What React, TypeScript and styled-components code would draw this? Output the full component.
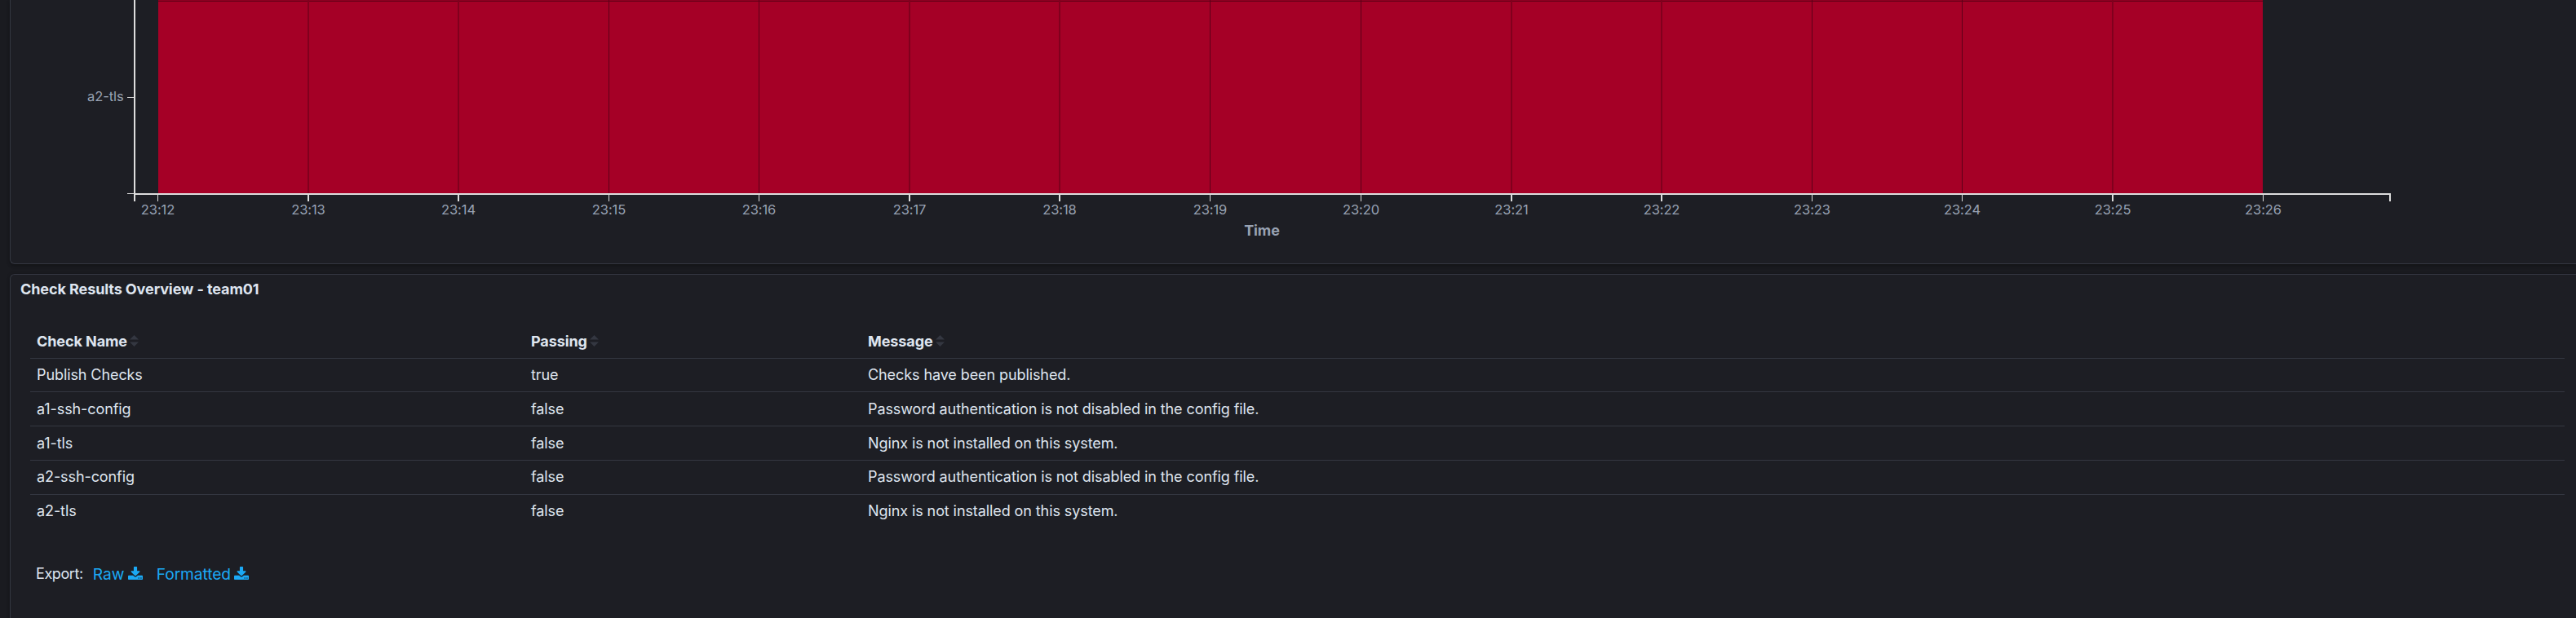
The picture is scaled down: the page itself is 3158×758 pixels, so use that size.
import React from "react";
import styled, { createGlobalStyle } from "styled-components";

const GlobalStyle = createGlobalStyle`
  * { box-sizing: border-box; }
  body {
    margin: 0;
    background: #1a1b20;
    color: #dfe5ef;
    font-family: Inter, "Liberation Sans", sans-serif;
    font-size: 18px;
    letter-spacing: -0.005em;
    overflow: hidden;
  }
`;

const Dashboard = styled.main`
  display: flex;
  flex-direction: column;
  gap: 12px;
  height: 758px;
  padding-left: 12px;
  overflow: hidden;
`;

const Panel = styled.section<{ $height: number; $cutTop?: boolean }>`
  flex: none;
  height: ${(p) => p.$height}px;
  background: #1d1e24;
  border: 1px solid #343741;
  border-right: 0;
  ${(p) => (p.$cutTop ? "border-top: 0;" : "")}
  border-radius: ${(p) => (p.$cutTop ? "0 0 0 6px" : "6px 0 0 0")};
  box-shadow: 0 1px 5px rgba(0, 0, 0, 0.2), 0 3px 4px rgba(0, 0, 0, 0.15);
`;

const Chart = styled.svg`
  display: block;
  font-size: 16.5px;
  fill: #98a2b3;
  shape-rendering: crispEdges;
`;

const AxisTitle = styled.text`
  font-size: 18px;
  font-weight: 700;
`;

const PanelTitle = styled.h2`
  margin: 0;
  padding: 4px 12px 0;
  height: 62px;
  font-size: 18px;
  line-height: 27px;
  font-weight: 700;
`;

const Table = styled.div`
  margin: 0 14px 0 24px;
`;

const Row = styled.div<{ $height: number; $top: number; $head?: boolean; $last?: boolean }>`
  display: grid;
  grid-template-columns: 606px 413px 1fr;
  height: ${(p) => p.$height}px;
  padding: ${(p) => p.$top}px 0 0 8px;
  line-height: 27px;
  font-weight: ${(p) => (p.$head ? 700 : 400)};
  border-bottom: ${(p) => (p.$last ? "0" : "1px solid #343741")};
`;

const Cell = styled.div`
  display: flex;
  align-items: flex-start;
`;

const SortMark = styled.svg`
  margin: 6px 0 0 3px;
  fill: #343741;
`;

const ExportBar = styled.div`
  display: flex;
  padding: 41px 0 0 31px;
  line-height: 28px;
`;

const ExportLabel = styled.span`
  letter-spacing: -0.4px;
`;

const ExportLink = styled.a<{ $gap: number }>`
  display: flex;
  margin-left: ${(p) => p.$gap}px;
  font-size: 19.2px;
  color: #1ba9f5;
`;

const DownloadGlyph = styled.svg`
  margin: 5px 0 0 4.5px;
  fill: currentColor;
`;

const DownloadIcon = () => (
  <DownloadGlyph width="18" height="16" viewBox="64 0 1664 1536" preserveAspectRatio="none">
    <path d="M1344 1344q0-26-19-45t-45-19-45 19-19 45 19 45 45 19 45-19 19-45zm256 0q0-26-19-45t-45-19-45 19-19 45 19 45 45 19 45-19 19-45zm128-224v320q0 40-28 68t-68 28h-1472q-40 0-68-28t-28-68v-320q0-40 28-68t68-28h465l135 136q58 56 136 56t136-56l136-136h464q40 0 68 28t28 68zm-325-569q17 41-14 70l-448 448q-18 19-45 19t-45-19l-448-448q-31-29-14-70 17-39 59-39h256v-448q0-26 19-45t45-19h256q26 0 45 19t19 45v448h256q42 0 59 39z" />
  </DownloadGlyph>
);

const SortIcon = () => (
  <SortMark width="11" height="14" viewBox="0 0 11 14">
    <path d="M0 5.5 5.5 0 11 5.5zM0 8.5h11L5.5 14z" />
  </SortMark>
);

const ticks = [
  { x: 193, w: 1 },
  { x: 377, w: 2 },
  { x: 561, w: 2 },
  { x: 746, w: 1 },
  { x: 930, w: 1 },
  { x: 1114, w: 2 },
  { x: 1298, w: 2 },
  { x: 1483, w: 1 },
  { x: 1668, w: 1 },
  { x: 1852, w: 2 },
  { x: 2036, w: 2 },
  { x: 2221, w: 1 },
  { x: 2405, w: 1 },
  { x: 2589, w: 2 },
  { x: 2774, w: 1 },
].map((t, i) => ({ ...t, label: `23:${12 + i}` }));

const checks = [
  { name: "Publish Checks", passing: "true", message: "Checks have been published.", height: 41, top: 6 },
  { name: "a1-ssh-config", passing: "false", message: "Password authentication is not disabled in the config file.", height: 42, top: 7 },
  { name: "a1-tls", passing: "false", message: "Nginx is not installed on this system.", height: 42, top: 7 },
  { name: "a2-ssh-config", passing: "false", message: "Password authentication is not disabled in the config file.", height: 42, top: 6 },
  { name: "a2-tls", passing: "false", message: "Nginx is not installed on this system.", height: 42, top: 6 },
];

const Heatmap = () => (
  <Chart width="3145" height="323" viewBox="13 0 3145 323">
    <rect x="194" y="0" width="2580" height="237" fill="#a50026" />
    <rect x="194" y="0" width="2580" height="1" fill="#8f0021" />
    <rect x="194" y="1" width="2580" height="1" fill="#640017" />
    {ticks.slice(1, -1).map((t) => (
      <rect key={t.label} x={t.x} y="0" width={t.w} height="237" fill={t.w === 2 ? "#80001d" : "#5c0018"} />
    ))}
    <g fill="#dddddd">
      <rect x="164" y="0" width="2" height="247" />
      <rect x="164" y="237" width="2767" height="2" />
      <rect x="2929" y="237" width="2" height="10" />
      <rect x="156" y="119" width="8" height="1" />
      <rect x="156" y="237" width="8" height="1" />
      {ticks.map((t) => (
        <rect key={t.label} x={t.x} y="239" width={t.w} height="8" />
      ))}
    </g>
    <text x="151.5" y="124" textAnchor="end">a2-tls</text>
    {ticks.map((t) => (
      <text key={t.label} x={t.x + t.w / 2} y="263" textAnchor="middle">{t.label}</text>
    ))}
    <AxisTitle x="1547" y="289" textAnchor="middle">Time</AxisTitle>
  </Chart>
);

export default function App() {
  return (
    <>
      <GlobalStyle />
      <Dashboard>
        <Panel $height={324} $cutTop>
          <Heatmap />
        </Panel>
        <Panel $height={440}>
          <PanelTitle>Check Results Overview - team01</PanelTitle>
          <Table>
            <Row $height={41} $top={6} $head>
              {["Check Name", "Passing", "Message"].map((h) => (
                <Cell key={h}>
                  {h}
                  <SortIcon />
                </Cell>
              ))}
            </Row>
            {checks.map((c, i) => (
              <Row key={c.name} $height={c.height} $top={c.top} $last={i === checks.length - 1}>
                <Cell>{c.name}</Cell>
                <Cell>{c.passing}</Cell>
                <Cell>{c.message}</Cell>
              </Row>
            ))}
          </Table>
          <ExportBar>
            <ExportLabel>Export:</ExportLabel>
            <ExportLink $gap={12}>
              Raw
              <DownloadIcon />
            </ExportLink>
            <ExportLink $gap={17}>
              Formatted
              <DownloadIcon />
            </ExportLink>
          </ExportBar>
        </Panel>
      </Dashboard>
    </>
  );
}
